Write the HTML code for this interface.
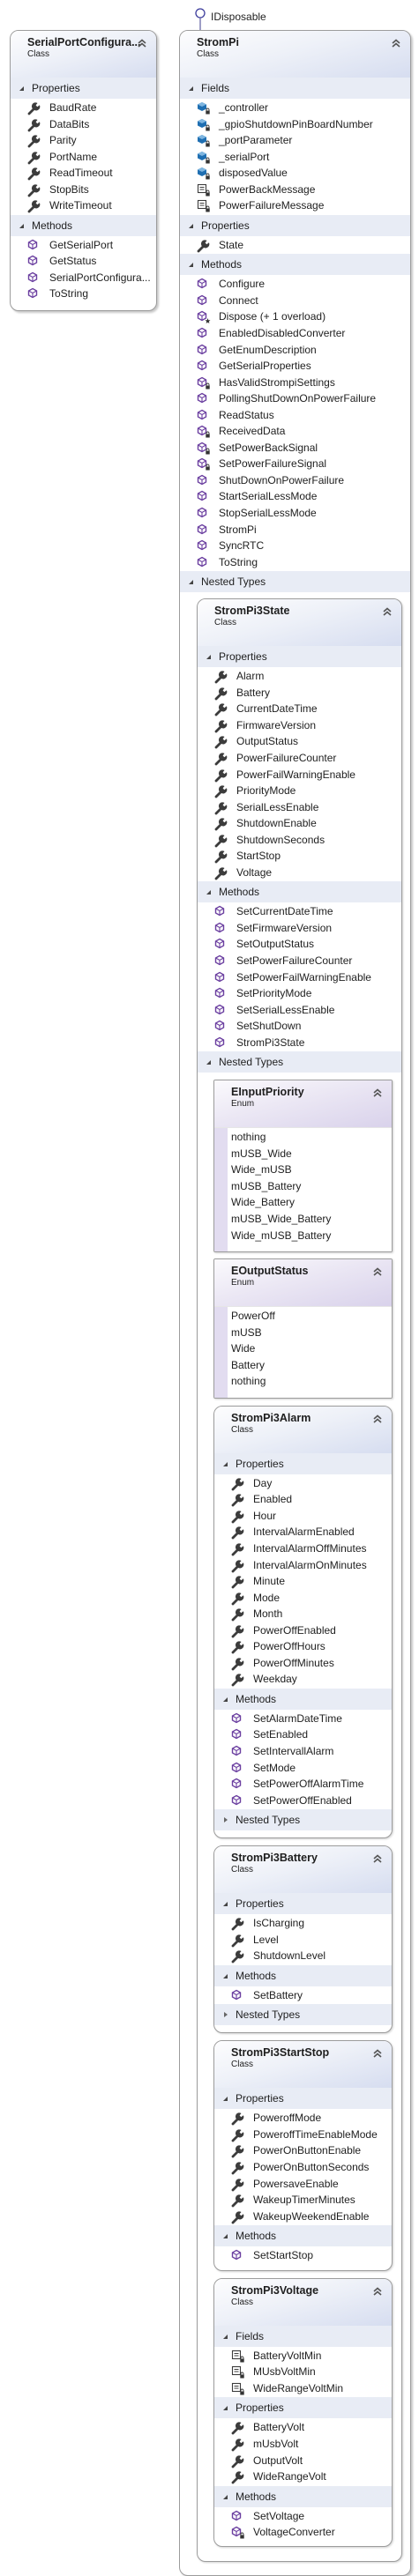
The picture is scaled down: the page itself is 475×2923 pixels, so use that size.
<!DOCTYPE html>
<html><head><meta charset="utf-8">
<style>
*{box-sizing:border-box;margin:0;padding:0}
body{width:475px;height:2908px;background:#fff;font-family:"Liberation Sans",sans-serif;color:#1e1e1e;position:relative;overflow:hidden}
.box{position:absolute;border:1px solid #9c9c9c;border-radius:10px;background:#fff;box-shadow:2px 2px 2px rgba(0,0,0,.22);overflow:hidden}
.nb{position:relative;border:1px solid #9c9c9c;border-radius:10px;background:#fff;box-shadow:1px 1px 2px rgba(0,0,0,.18);overflow:hidden;margin-bottom:8px}
.en{border-radius:2px}
.hd{height:53px;padding:5px 0 0 19px;position:relative;background:linear-gradient(165deg,#fdfdfe 0%,#eef1f8 45%,#d6ddf0 100%)}
.en .hd{background:linear-gradient(165deg,#fbfafd 0%,#ebe7f4 45%,#d9d2eb 100%)}
.t{font-weight:bold;font-size:12.5px;line-height:16px}
.k{font-size:10px;line-height:12px}
.chev{position:absolute;right:11px;top:9px;width:10px;height:10px}
.sh{height:24px;line-height:24px;background:#e8ecf5;padding-left:24px;font-size:12px;position:relative}
.sh:before{content:"";position:absolute;left:10px;top:10px;border-style:solid;border-width:0 0 5px 5px;border-color:transparent transparent #444 transparent}
.sh.c:before{left:11px;top:9px;border-width:3px 0 3px 4px;border-color:transparent transparent transparent #666}
.rows{padding:1px 0}
.r{height:18.55px;line-height:18.55px;padding-left:44px;font-size:12px;position:relative;white-space:nowrap}
.r svg{position:absolute;left:19px;top:2px;width:16px;height:16px}
.ev{background:linear-gradient(90deg,#e2dcf0 0,#e2dcf0 15px,#fff 15px);padding:1px 0 9px 0;border-top:1px solid #e6e6e6}
.ev div{height:18.55px;line-height:18.55px;padding-left:19px;font-size:12px}
</style></head><body>
<svg width="0" height="0" style="position:absolute">
<defs>
<symbol id="w" viewBox="0 0 16 16"><path d="M2 14 L7.5 8.5" stroke="#3c3c3c" stroke-width="2.8" stroke-linecap="round"/><path d="M6.3 8.8 A4.3 4.3 0 0 1 11.5 2 L9.6 4.4 L11.3 6.2 L13.9 4.3 A4.3 4.3 0 0 1 8.2 10 Z" fill="#3c3c3c"/></symbol>
<symbol id="m" viewBox="0 0 16 16"><polygon points="6,1.5 10.5,4 10.5,9 6,11.5 1.5,9 1.5,4" fill="none" stroke="#6b3fa0" stroke-width="1.4"/><path d="M1.5 4 L6 6.5 L10.5 4 M6 6.5 V11.5" stroke="#6b3fa0" stroke-width="1.1" fill="none"/></symbol>
<symbol id="f" viewBox="0 0 16 16"><polygon points="6,1 11,3.5 11,8.5 6,11 1,8.5 1,3.5" fill="#1f6fb2"/><polygon points="6,1 11,3.5 6,6 1,3.5" fill="#7fb6e0"/></symbol>
<symbol id="c" viewBox="0 0 16 16"><rect x="1.5" y="1.5" width="9" height="9" fill="#fff" stroke="#3c3c3c" stroke-width="1.1"/><path d="M3.5 4.5h5M3.5 7h5" stroke="#3c3c3c" stroke-width="1.1"/></symbol>
<symbol id="l" viewBox="0 0 16 16"><path d="M11 10.5 v-1 a1.5 1.5 0 0 1 3 0 v1" stroke="#333" fill="none" stroke-width="0.9"/><rect x="10.3" y="10.5" width="4.4" height="4" fill="#333"/></symbol>
<symbol id="s" viewBox="0 0 16 16"><polygon points="12.5,9 13.3,11.2 15.5,11.3 13.8,12.7 14.4,15 12.5,13.7 10.6,15 11.2,12.7 9.5,11.3 11.7,11.2" fill="#333"/></symbol>
<symbol id="ch" viewBox="0 0 10 10"><path d="M1 5 L5 1.5 L9 5 M1 9 L5 5.5 L9 9" stroke="#555" stroke-width="1.6" fill="none"/></symbol>
</defs></svg>

<svg style="position:absolute;left:220px;top:8px" width="16" height="28"><circle cx="7" cy="7" r="5" fill="#fff" stroke="#3c3c9c" stroke-width="1.3"/><path d="M7 12 V28" stroke="#6a6aa8" stroke-width="1.3"/></svg>
<div style="position:absolute;left:239px;top:11px;font-size:12px;line-height:16px">IDisposable</div>

<div class="box" style="left:11px;top:34px;width:167px;padding-bottom:8px">
<div class="hd"><div class="t">SerialPortConfigura...</div><div class="k">Class</div><svg class="chev"><use href="#ch"/></svg></div>
<div class="sh">Properties</div>
<div class="rows">
<div class="r"><svg><use href="#w"/></svg>BaudRate</div>
<div class="r"><svg><use href="#w"/></svg>DataBits</div>
<div class="r"><svg><use href="#w"/></svg>Parity</div>
<div class="r"><svg><use href="#w"/></svg>PortName</div>
<div class="r"><svg><use href="#w"/></svg>ReadTimeout</div>
<div class="r"><svg><use href="#w"/></svg>StopBits</div>
<div class="r"><svg><use href="#w"/></svg>WriteTimeout</div>
</div>
<div class="sh">Methods</div>
<div class="rows">
<div class="r"><svg><use href="#m"/></svg>GetSerialPort</div>
<div class="r"><svg><use href="#m"/></svg>GetStatus</div>
<div class="r"><svg><use href="#m"/></svg>SerialPortConfigura...</div>
<div class="r"><svg><use href="#m"/></svg>ToString</div>
</div>
</div>

<div class="box" style="left:203px;top:34px;width:263px">
<div class="hd"><div class="t">StromPi</div><div class="k">Class</div><svg class="chev"><use href="#ch"/></svg></div>
<div class="sh">Fields</div>
<div class="rows">
<div class="r"><svg><use href="#f"/><use href="#l"/></svg>_controller</div>
<div class="r"><svg><use href="#f"/><use href="#l"/></svg>_gpioShutdownPinBoardNumber</div>
<div class="r"><svg><use href="#f"/><use href="#l"/></svg>_portParameter</div>
<div class="r"><svg><use href="#f"/><use href="#l"/></svg>_serialPort</div>
<div class="r"><svg><use href="#f"/><use href="#l"/></svg>disposedValue</div>
<div class="r"><svg><use href="#c"/><use href="#l"/></svg>PowerBackMessage</div>
<div class="r"><svg><use href="#c"/><use href="#l"/></svg>PowerFailureMessage</div>
</div>
<div class="sh">Properties</div>
<div class="rows"><div class="r"><svg><use href="#w"/></svg>State</div></div>
<div class="sh">Methods</div>
<div class="rows">
<div class="r"><svg><use href="#m"/></svg>Configure</div>
<div class="r"><svg><use href="#m"/></svg>Connect</div>
<div class="r"><svg><use href="#m"/><use href="#s"/></svg>Dispose (+ 1 overload)</div>
<div class="r"><svg><use href="#m"/></svg>EnabledDisabledConverter</div>
<div class="r"><svg><use href="#m"/></svg>GetEnumDescription</div>
<div class="r"><svg><use href="#m"/></svg>GetSerialProperties</div>
<div class="r"><svg><use href="#m"/><use href="#l"/></svg>HasValidStrompiSettings</div>
<div class="r"><svg><use href="#m"/></svg>PollingShutDownOnPowerFailure</div>
<div class="r"><svg><use href="#m"/></svg>ReadStatus</div>
<div class="r"><svg><use href="#m"/><use href="#l"/></svg>ReceivedData</div>
<div class="r"><svg><use href="#m"/><use href="#l"/></svg>SetPowerBackSignal</div>
<div class="r"><svg><use href="#m"/><use href="#l"/></svg>SetPowerFailureSignal</div>
<div class="r"><svg><use href="#m"/></svg>ShutDownOnPowerFailure</div>
<div class="r"><svg><use href="#m"/></svg>StartSerialLessMode</div>
<div class="r"><svg><use href="#m"/></svg>StopSerialLessMode</div>
<div class="r"><svg><use href="#m"/></svg>StromPi</div>
<div class="r"><svg><use href="#m"/></svg>SyncRTC</div>
<div class="r"><svg><use href="#m"/></svg>ToString</div>
</div>
<div class="sh">Nested Types</div>
<div style="padding:7px 9px 15px 19px">

<div class="nb" style="margin-bottom:0">
<div class="hd"><div class="t">StromPi3State</div><div class="k">Class</div><svg class="chev"><use href="#ch"/></svg></div>
<div class="sh">Properties</div>
<div class="rows">
<div class="r"><svg><use href="#w"/></svg>Alarm</div>
<div class="r"><svg><use href="#w"/></svg>Battery</div>
<div class="r"><svg><use href="#w"/></svg>CurrentDateTime</div>
<div class="r"><svg><use href="#w"/></svg>FirmwareVersion</div>
<div class="r"><svg><use href="#w"/></svg>OutputStatus</div>
<div class="r"><svg><use href="#w"/></svg>PowerFailureCounter</div>
<div class="r"><svg><use href="#w"/></svg>PowerFailWarningEnable</div>
<div class="r"><svg><use href="#w"/></svg>PriorityMode</div>
<div class="r"><svg><use href="#w"/></svg>SerialLessEnable</div>
<div class="r"><svg><use href="#w"/></svg>ShutdownEnable</div>
<div class="r"><svg><use href="#w"/></svg>ShutdownSeconds</div>
<div class="r"><svg><use href="#w"/></svg>StartStop</div>
<div class="r"><svg><use href="#w"/></svg>Voltage</div>
</div>
<div class="sh">Methods</div>
<div class="rows">
<div class="r"><svg><use href="#m"/></svg>SetCurrentDateTime</div>
<div class="r"><svg><use href="#m"/></svg>SetFirmwareVersion</div>
<div class="r"><svg><use href="#m"/></svg>SetOutputStatus</div>
<div class="r"><svg><use href="#m"/></svg>SetPowerFailureCounter</div>
<div class="r"><svg><use href="#m"/></svg>SetPowerFailWarningEnable</div>
<div class="r"><svg><use href="#m"/></svg>SetPriorityMode</div>
<div class="r"><svg><use href="#m"/></svg>SetSerialLessEnable</div>
<div class="r"><svg><use href="#m"/></svg>SetShutDown</div>
<div class="r"><svg><use href="#m"/></svg>StromPi3State</div>
</div>
<div class="sh">Nested Types</div>
<div style="padding:8px 10px 16px 18px">

<div class="nb en" style="margin-bottom:7px">
<div class="hd"><div class="t">EInputPriority</div><div class="k">Enum</div><svg class="chev"><use href="#ch"/></svg></div>
<div class="ev"><div>nothing</div><div>mUSB_Wide</div><div>Wide_mUSB</div><div>mUSB_Battery</div><div>Wide_Battery</div><div>mUSB_Wide_Battery</div><div>Wide_mUSB_Battery</div></div>
</div>

<div class="nb en">
<div class="hd"><div class="t">EOutputStatus</div><div class="k">Enum</div><svg class="chev"><use href="#ch"/></svg></div>
<div class="ev"><div>PowerOff</div><div>mUSB</div><div>Wide</div><div>Battery</div><div>nothing</div></div>
</div>

<div class="nb" style="padding-bottom:8px">
<div class="hd"><div class="t">StromPi3Alarm</div><div class="k">Class</div><svg class="chev"><use href="#ch"/></svg></div>
<div class="sh">Properties</div>
<div class="rows">
<div class="r"><svg><use href="#w"/></svg>Day</div>
<div class="r"><svg><use href="#w"/></svg>Enabled</div>
<div class="r"><svg><use href="#w"/></svg>Hour</div>
<div class="r"><svg><use href="#w"/></svg>IntervalAlarmEnabled</div>
<div class="r"><svg><use href="#w"/></svg>IntervalAlarmOffMinutes</div>
<div class="r"><svg><use href="#w"/></svg>IntervalAlarmOnMinutes</div>
<div class="r"><svg><use href="#w"/></svg>Minute</div>
<div class="r"><svg><use href="#w"/></svg>Mode</div>
<div class="r"><svg><use href="#w"/></svg>Month</div>
<div class="r"><svg><use href="#w"/></svg>PowerOffEnabled</div>
<div class="r"><svg><use href="#w"/></svg>PowerOffHours</div>
<div class="r"><svg><use href="#w"/></svg>PowerOffMinutes</div>
<div class="r"><svg><use href="#w"/></svg>Weekday</div>
</div>
<div class="sh">Methods</div>
<div class="rows">
<div class="r"><svg><use href="#m"/></svg>SetAlarmDateTime</div>
<div class="r"><svg><use href="#m"/></svg>SetEnabled</div>
<div class="r"><svg><use href="#m"/></svg>SetIntervallAlarm</div>
<div class="r"><svg><use href="#m"/></svg>SetMode</div>
<div class="r"><svg><use href="#m"/></svg>SetPowerOffAlarmTime</div>
<div class="r"><svg><use href="#m"/></svg>SetPowerOffEnabled</div>
</div>
<div class="sh c">Nested Types</div>
</div>

<div class="nb" style="padding-bottom:8px">
<div class="hd"><div class="t">StromPi3Battery</div><div class="k">Class</div><svg class="chev"><use href="#ch"/></svg></div>
<div class="sh">Properties</div>
<div class="rows">
<div class="r"><svg><use href="#w"/></svg>IsCharging</div>
<div class="r"><svg><use href="#w"/></svg>Level</div>
<div class="r"><svg><use href="#w"/></svg>ShutdownLevel</div>
</div>
<div class="sh">Methods</div>
<div class="rows"><div class="r"><svg><use href="#m"/></svg>SetBattery</div></div>
<div class="sh c">Nested Types</div>
</div>

<div class="nb" style="padding-bottom:6px">
<div class="hd"><div class="t">StromPi3StartStop</div><div class="k">Class</div><svg class="chev"><use href="#ch"/></svg></div>
<div class="sh">Properties</div>
<div class="rows">
<div class="r"><svg><use href="#w"/></svg>PoweroffMode</div>
<div class="r"><svg><use href="#w"/></svg>PoweroffTimeEnableMode</div>
<div class="r"><svg><use href="#w"/></svg>PowerOnButtonEnable</div>
<div class="r"><svg><use href="#w"/></svg>PowerOnButtonSeconds</div>
<div class="r"><svg><use href="#w"/></svg>PowersaveEnable</div>
<div class="r"><svg><use href="#w"/></svg>WakeupTimerMinutes</div>
<div class="r"><svg><use href="#w"/></svg>WakeupWeekendEnable</div>
</div>
<div class="sh">Methods</div>
<div class="rows"><div class="r"><svg><use href="#m"/></svg>SetStartStop</div></div>
</div>

<div class="nb" style="padding-bottom:5px;margin-bottom:0">
<div class="hd"><div class="t">StromPi3Voltage</div><div class="k">Class</div><svg class="chev"><use href="#ch"/></svg></div>
<div class="sh">Fields</div>
<div class="rows">
<div class="r"><svg><use href="#c"/><use href="#l"/></svg>BatteryVoltMin</div>
<div class="r"><svg><use href="#c"/><use href="#l"/></svg>MUsbVoltMin</div>
<div class="r"><svg><use href="#c"/><use href="#l"/></svg>WideRangeVoltMin</div>
</div>
<div class="sh">Properties</div>
<div class="rows">
<div class="r"><svg><use href="#w"/></svg>BatteryVolt</div>
<div class="r"><svg><use href="#w"/></svg>mUsbVolt</div>
<div class="r"><svg><use href="#w"/></svg>OutputVolt</div>
<div class="r"><svg><use href="#w"/></svg>WideRangeVolt</div>
</div>
<div class="sh">Methods</div>
<div class="rows">
<div class="r"><svg><use href="#m"/></svg>SetVoltage</div>
<div class="r"><svg><use href="#m"/><use href="#l"/></svg>VoltageConverter</div>
</div>
</div>

</div>
</div>
</div>
</div>
</body></html>
